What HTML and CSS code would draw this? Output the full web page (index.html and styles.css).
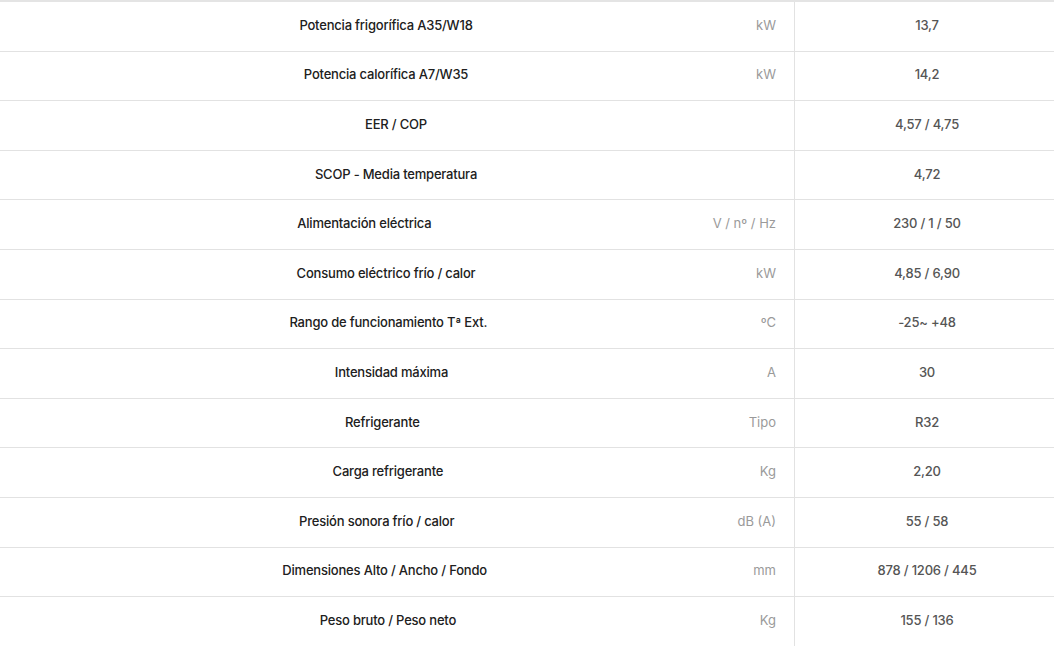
FILE: index.html
```html
<!DOCTYPE html>
<html lang="es">
<head>
<meta charset="utf-8">
<title>Características técnicas</title>
<link rel="stylesheet" href="styles.css">
</head>
<body>
<div class="specs">
  <div class="row"><div class="main"><span class="label">Potencia frigorífica A35/W18</span><span class="unit">kW</span></div><div class="value">13,7</div></div>
  <div class="row"><div class="main"><span class="label">Potencia calorífica A7/W35</span><span class="unit">kW</span></div><div class="value">14,2</div></div>
  <div class="row"><div class="main"><span class="label">EER / COP</span><span class="unit"></span></div><div class="value">4,57 / 4,75</div></div>
  <div class="row"><div class="main"><span class="label">SCOP - Media temperatura</span><span class="unit"></span></div><div class="value">4,72</div></div>
  <div class="row"><div class="main"><span class="label">Alimentación eléctrica</span><span class="unit">V / nº / Hz</span></div><div class="value">230 / 1 / 50</div></div>
  <div class="row"><div class="main"><span class="label">Consumo eléctrico frío / calor</span><span class="unit">kW</span></div><div class="value">4,85 / 6,90</div></div>
  <div class="row"><div class="main"><span class="label">Rango de funcionamiento Tª Ext.</span><span class="unit">ºC</span></div><div class="value">-25~ +48</div></div>
  <div class="row"><div class="main"><span class="label">Intensidad máxima</span><span class="unit">A</span></div><div class="value">30</div></div>
  <div class="row"><div class="main"><span class="label">Refrigerante</span><span class="unit">Tipo</span></div><div class="value">R32</div></div>
  <div class="row"><div class="main"><span class="label">Carga refrigerante</span><span class="unit">Kg</span></div><div class="value">2,20</div></div>
  <div class="row"><div class="main"><span class="label">Presión sonora frío / calor</span><span class="unit">dB (A)</span></div><div class="value">55 / 58</div></div>
  <div class="row"><div class="main"><span class="label">Dimensiones Alto / Ancho / Fondo</span><span class="unit">mm</span></div><div class="value">878 / 1206 / 445</div></div>
  <div class="row"><div class="main"><span class="label">Peso bruto / Peso neto</span><span class="unit">Kg</span></div><div class="value">155 / 136</div></div>
</div>
</body>
</html>
```
FILE: styles.css
```css
html, body {
  margin: 0;
  padding: 0;
  background: #ffffff;
}
body {
  font-family: Inter, "Noto Sans", "Liberation Sans", sans-serif;
  font-size: 13px;
  letter-spacing: -0.2px;
  overflow: hidden;
}
.specs {
  border-top: 2px solid #e4e4e4;
  display: flex;
  flex-direction: column;
}
.row {
  display: grid;
  grid-template-columns: 795px 1fr;
  height: 49.6px;
  box-sizing: border-box;
  border-bottom: 1px solid #e2e2e2;
}
.main {
  display: flex;
  align-items: center;
  padding: 0 18px 3px 16px;
  border-right: 1px solid #e2e2e2;
}
.label {
  flex: 1;
  text-align: center;
  color: #202020;
  font-weight: 500;
}
.unit {
  flex: none;
  color: #9a9a9a;
  letter-spacing: 0;
}
.value {
  display: flex;
  align-items: center;
  justify-content: center;
  padding: 0 0 3px 5px;
  color: #555555;
  font-weight: 500;
}
```
